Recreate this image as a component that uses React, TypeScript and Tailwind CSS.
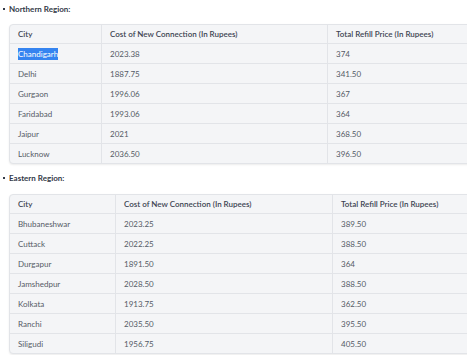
import React from "react";

type Row = [string, string, string];

const northern: Row[] = [
  ["Chandigarh", "2023.38", "374"],
  ["Delhi", "1887.75", "341.50"],
  ["Gurgaon", "1996.06", "367"],
  ["Faridabad", "1993.06", "364"],
  ["Jaipur", "2021", "368.50"],
  ["Lucknow", "2036.50", "396.50"],
];

const eastern: Row[] = [
  ["Bhubaneshwar", "2023.25", "389.50"],
  ["Cuttack", "2022.25", "388.50"],
  ["Durgapur", "1891.50", "364"],
  ["Jamshedpur", "2028.50", "388.50"],
  ["Kolkata", "1913.75", "362.50"],
  ["Ranchi", "2035.50", "395.50"],
  ["Siligudi", "1956.75", "405.50"],
];

function Table({ rows, w1, w2, highlightFirst }: { rows: Row[]; w1: number; w2: number; highlightFirst?: boolean }) {
  const header: Row = ["City", "Cost of New Connection (In Rupees)", "Total Refill Price (In Rupees)"];
  const all = [header, ...rows];
  return (
    <div className="w-[540px] rounded-[4px] border border-[#e2e4e8] bg-[#f4f5f7] overflow-hidden shadow-[0_1px_2px_rgba(0,0,0,0.08)]">
      {all.map((r, i) => {
        const isFirst = i === 0;
        const isLast = i === all.length - 1;
        return (
          <div
            key={i}
            className={`flex items-center ${isFirst || isLast ? "h-[19px]" : "h-[20px]"} ${
              !isLast ? "border-b border-[#e2e4e8]" : ""
            } ${isFirst ? "font-semibold text-[#3d4452]" : "text-[#555b66]"}`}
          >
            <div className="h-full flex items-center pl-[8px] border-r border-[#e2e4e8] shrink-0" style={{ width: w1 }}>
              {i === 1 && highlightFirst ? (
                <span className="bg-[#3584f0] text-white leading-[12px]">{r[0]}</span>
              ) : (
                r[0]
              )}
            </div>
            <div className="h-full flex items-center pl-[8px] border-r border-[#e2e4e8] shrink-0" style={{ width: w2 }}>
              {r[1]}
            </div>
            <div className="h-full flex items-center pl-[8px] flex-1">{r[2]}</div>
          </div>
        );
      })}
    </div>
  );
}

export default function App() {
  return (
    <div
      className="w-[467px] h-[355px] overflow-hidden bg-white text-[8px]"
      style={{ fontFamily: "Lato, 'Open Sans', sans-serif" }}
    >
      <div className="pl-[9px]">
        <div className="relative h-[18px] flex items-center font-bold text-[#333a48]">
          <span className="absolute left-[-6px] top-[8px] w-[2px] h-[2px] bg-[#333a48]"></span>
          Northern Region:
        </div>
        <div className="mt-[6px]">
          <Table rows={northern} w1={92} w2={226} highlightFirst />
        </div>
        <div className="relative mt-[5px] h-[18px] flex items-center font-bold text-[#333a48]">
          <span className="absolute left-[-6px] top-[8px] w-[2px] h-[2px] bg-[#333a48]"></span>
          Eastern Region:
        </div>
        <div className="mt-[7px]">
          <Table rows={eastern} w1={106} w2={217} />
        </div>
      </div>
    </div>
  );
}
